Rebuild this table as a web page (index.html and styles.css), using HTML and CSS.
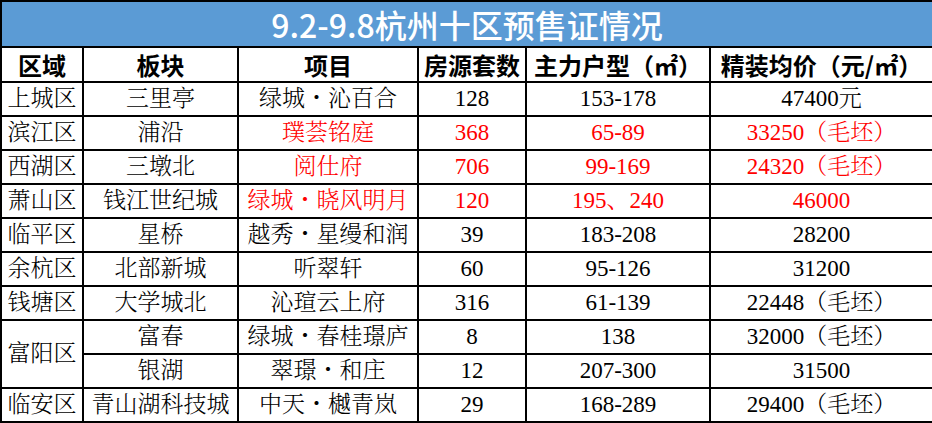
FILE: index.html
```html
<!DOCTYPE html>
<html lang="zh-CN">
<head>
<meta charset="utf-8">
<title>9.2-9.8杭州十区预售证情况</title>
<link rel="stylesheet" href="styles.css">
</head>
<body>
<table class="sheet">
  <colgroup>
    <col class="c1"><col class="c2"><col class="c3"><col class="c4"><col class="c5"><col class="c6">
  </colgroup>
  <thead>
    <tr class="title-row"><th colspan="6" class="title">9.2-9.8杭州十区预售证情况</th></tr>
    <tr class="head-row">
      <th>区域</th><th>板块</th><th>项目</th><th>房源套数</th><th>主力户型（㎡）</th><th>精装均价（元/㎡）</th>
    </tr>
  </thead>
  <tbody>
    <tr><td>上城区</td><td>三里亭</td><td>绿城・沁百合</td><td>128</td><td>153-178</td><td>47400元</td></tr>
    <tr><td>滨江区</td><td>浦沿</td><td class="red">璞荟铭庭</td><td class="red">368</td><td class="red">65-89</td><td class="red">33250（毛坯）</td></tr>
    <tr><td>西湖区</td><td>三墩北</td><td class="red">阅仕府</td><td class="red">706</td><td class="red">99-169</td><td class="red">24320（毛坯）</td></tr>
    <tr><td>萧山区</td><td>钱江世纪城</td><td class="red">绿城・晓风明月</td><td class="red">120</td><td class="red">195、240</td><td class="red">46000</td></tr>
    <tr><td>临平区</td><td>星桥</td><td>越秀・星缦和润</td><td>39</td><td>183-208</td><td>28200</td></tr>
    <tr><td>余杭区</td><td>北部新城</td><td>听翠轩</td><td>60</td><td>95-126</td><td>31200</td></tr>
    <tr><td>钱塘区</td><td>大学城北</td><td>沁瑄云上府</td><td>316</td><td>61-139</td><td>22448（毛坯）</td></tr>
    <tr><td rowspan="2">富阳区</td><td>富春</td><td>绿城・春桂璟庐</td><td>8</td><td>138</td><td>32000（毛坯）</td></tr>
    <tr><td>银湖</td><td>翠璟・和庄</td><td>12</td><td>207-300</td><td>31500</td></tr>
    <tr><td>临安区</td><td>青山湖科技城</td><td>中天・樾青岚</td><td>29</td><td>168-289</td><td>29400（毛坯）</td></tr>
  </tbody>
</table>
</body>
</html>
```
FILE: styles.css
```css
html, body {
  margin: 0;
  padding: 0;
  background: #ffffff;
}

.sheet {
  width: 932px;
  border-collapse: collapse;
  table-layout: fixed;
  color: #000000;
}

.c1 { width: 82px; }
.c2 { width: 155px; }
.c3 { width: 180px; }
.c4 { width: 108px; }
.c5 { width: 184px; }
.c6 { width: 223px; }

.sheet th,
.sheet td {
  border: 2px solid #000000;
  padding: 0;
  text-align: center;
  vertical-align: middle;
  white-space: nowrap;
  overflow: hidden;
}

.title-row { height: 46px; }

.title {
  background: #5b9bd5;
  color: #ffffff;
  font-family: "Noto Sans CJK SC", "Noto Sans", sans-serif;
  font-weight: 500;
  font-size: 32px;
  line-height: 40px;
}

.head-row { height: 35px; }

.head-row th {
  font-family: "Noto Sans CJK SC", "Noto Sans", sans-serif;
  font-weight: 700;
  font-size: 24px;
  line-height: 30px;
}

.sheet tbody tr { height: 34px; }

.sheet td {
  font-family: "Liberation Serif", "Noto Serif CJK SC", "Noto Sans CJK SC", serif;
  font-weight: 300;
  font-size: 23px;
  line-height: 30px;
}

.sheet td.red { color: #ff0000; }
```
